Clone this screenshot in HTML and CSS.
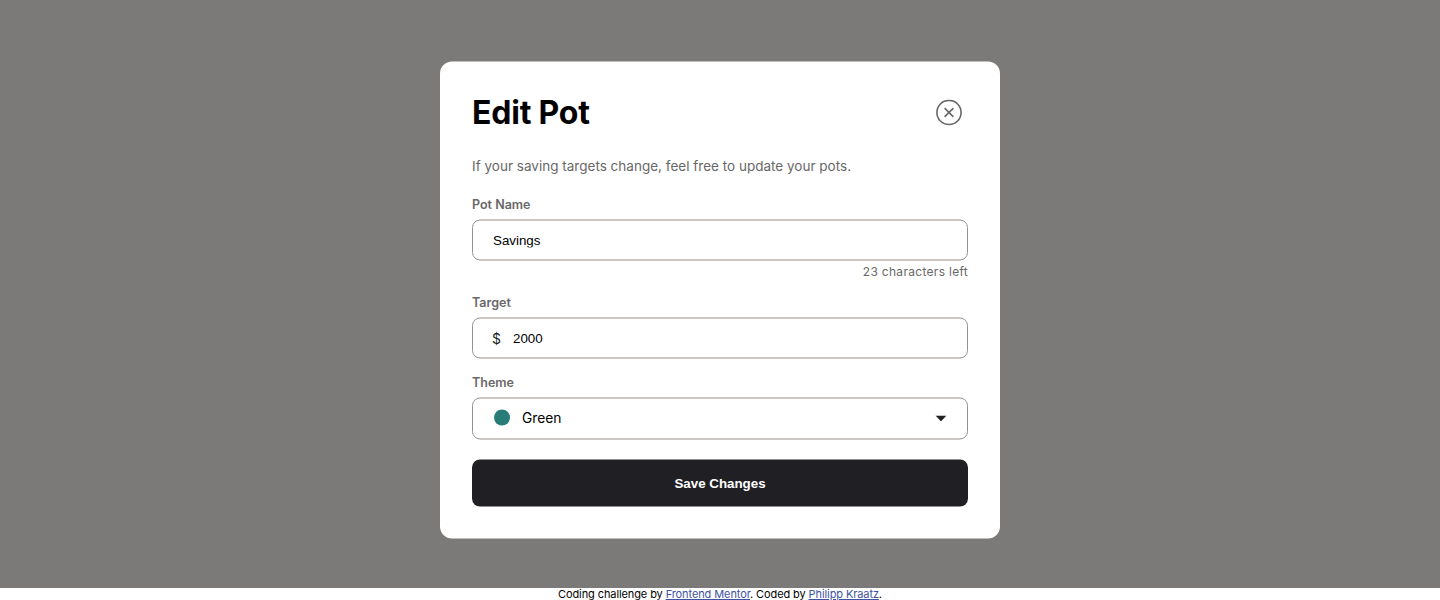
FILE: index.html
```html
<!DOCTYPE html>
<html lang="en">
<head>
<meta charset="utf-8">
<title>Edit Pot</title>
<link rel="stylesheet" href="styles.css">
</head>
<body>
<main class="backdrop"></main>
<form class="modal">
  <header class="modal-head">
    <h1 class="title">Edit Pot</h1>
    <button class="close" type="button" aria-label="Close">
      <svg width="26" height="26" viewBox="0 0 26 26" fill="none" stroke="#696868"><circle cx="13" cy="13" r="12.1" stroke-width="1.6"/><path d="M8.6 8.6l8.8 8.8M17.4 8.6l-8.8 8.8" stroke-width="1.6"/></svg>
    </button>
  </header>
  <p class="intro">If your saving targets change, feel free to update your pots.</p>
  <label class="label label-name" for="name">Pot Name</label>
  <div class="field"><input class="input" id="name" value="Savings"></div>
  <p class="hint">23 characters left</p>
  <label class="label label-target" for="target">Target</label>
  <div class="field"><span class="currency">$</span><input class="input" id="target" value="2000"></div>
  <span class="label label-theme">Theme</span>
  <div class="field select"><span class="dot"></span><span class="theme">Green</span>
    <svg class="caret" width="12" height="6" viewBox="0 0 12 6"><path d="M.5 0h11L6.6 5.2a.9.9 0 0 1-1.2 0z" fill="#201f24"/></svg>
  </div>
  <button class="save" type="button">Save Changes</button>
</form>
<footer class="attribution">Coding challenge by <a class="link" href="#">Frontend Mentor</a>. Coded by <a class="link" href="#">Philipp Kraatz</a>.</footer>
</body>
</html>
```
FILE: styles.css
```css
* { box-sizing: border-box; }
body { margin: 0; height: 600px; overflow: hidden; background: #fff; font-family: Inter, "Liberation Sans", sans-serif; }
.backdrop { height: 588px; background: #7c7a78; }
.modal {
  position: absolute; top: 50%; left: 50%; transform: translate(-50%, -50%);
  width: 560px; height: 477px; padding: 32px; border-radius: 12px; background: #fff;
  display: flex; flex-direction: column;
}
.modal-head { display: flex; align-items: center; justify-content: space-between; height: 38px; padding-right: 6px; }
.title { margin: 0; font-size: 32px; line-height: 38px; font-weight: 700; letter-spacing: -0.2px; color: #000; }
.close { width: 26px; height: 26px; padding: 0; border: 0; background: none; }
.close svg { display: block; }
.intro { margin: 24px 0 0; font-size: 13.5px; line-height: 21px; letter-spacing: 0.01px; color: #696868; white-space: nowrap; }
.label { font-size: 12.5px; line-height: 18px; font-weight: 600; letter-spacing: 0; color: #696868; }
.label-name { margin-top: 19px; }
.label-target { margin-top: 13px; }
.label-theme { margin-top: 15px; }
.field { display: flex; align-items: center; height: 41px; margin-top: 6px; padding: 0 20px; border: 1px solid #98908b; border-radius: 8px; font-size: 14px; color: #201f24; flex: none; }
.select { height: 42px; padding-left: 21px; }
.input { width: 100%; padding: 0; border: 0; outline: 0; background: none; font-family: "Liberation Sans", Arial, sans-serif; font-size: 13.333px; color: #000; }
.hint { margin: 2px 0 0; font-size: 12px; line-height: 18px; letter-spacing: 0.3px; text-align: right; color: #696868; }
.currency { width: 20px; flex: none; margin-left: -1px; margin-right: 1px; }
.dot { width: 16px; height: 16px; margin-bottom: 2px; border-radius: 50%; background: #277c78; }
.theme { margin-left: 12px; margin-bottom: 2px; font-size: 13.8px; color: #000; letter-spacing: -0.05px; }
.caret { margin-left: auto; }
.save { height: 47px; margin-top: 20px; flex: none; border: 0; border-radius: 8px; background: #201f24; color: #fff; font: bold 13.333px "Liberation Sans", Arial, sans-serif; }
.attribution { height: 12px; font-size: 11px; line-height: 13px; letter-spacing: -0.1px; text-align: center; color: #000; }
.link { color: #3e52a3; }
```
